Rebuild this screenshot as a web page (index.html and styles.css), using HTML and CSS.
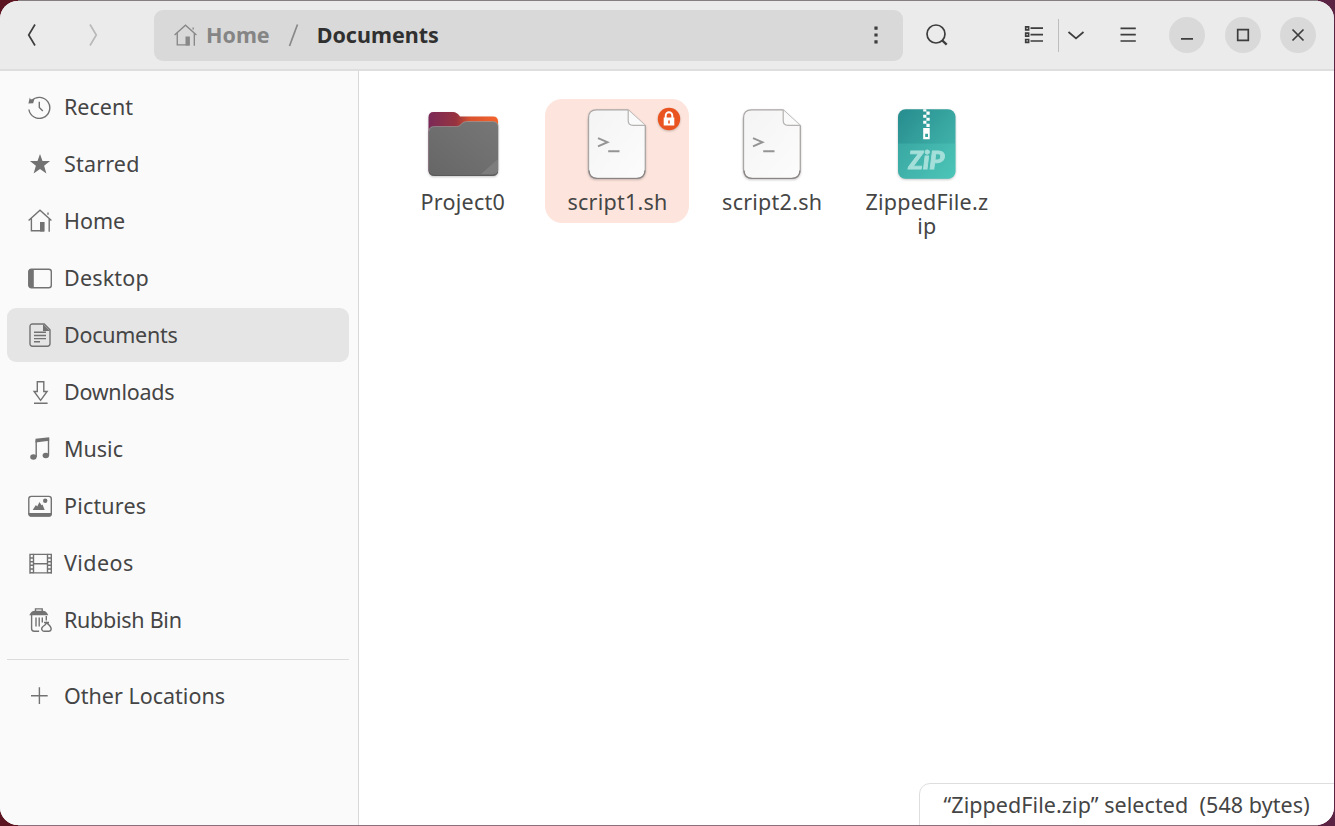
FILE: index.html
```html
<!DOCTYPE html>
<html lang="en">
<head>
<meta charset="utf-8">
<title>Documents</title>
<link rel="stylesheet" href="styles.css">
</head>
<body>
<svg class="defs" width="0" height="0">
  <defs>
    <symbol id="home" viewBox="0 0 24 24"><path d="M.6 11.600 12 1.200l11.400 10.400M3.400 9.500v12.300H16M21.200 10v12.800M20 3.600v2.200" fill="none" stroke="currentColor" stroke-width="1.400"/><path d="M12 13h4.600v9.400H12z" fill="currentColor"/></symbol>
    <linearGradient id="tab" x1="0" x2="1"><stop offset="0" stop-color="#7a2a58"/><stop offset=".4" stop-color="#97333f"/><stop offset=".6" stop-color="#d9532f"/><stop offset="1" stop-color="#f4632c"/></linearGradient>
    <linearGradient id="front" x1="0" y1="1" x2="1" y2="0"><stop offset="0" stop-color="#666"/><stop offset="1" stop-color="#777"/></linearGradient>
    <linearGradient id="paper" x1="0" y1="0" x2="1" y2="1"><stop offset="0" stop-color="#f4f4f4"/><stop offset="1" stop-color="#fcfcfc"/></linearGradient>
    <linearGradient id="teal" x1="0" y1="0" x2="1" y2="1"><stop offset="0" stop-color="#278c8e"/><stop offset="1" stop-color="#48bfb3"/></linearGradient>
    <symbol id="script" viewBox="0 0 72 72">
      <path d="M15.500 1.800h31.500l17.300 16v43.500q0 9-8.500 9H16q-8.500 0-8.500-9V10.300q0-8.500 8-8.500z" fill="url(#paper)" stroke="#aaa6a5" stroke-width="1.300"/>
      <path d="M8 62.500q.5 8 8.500 8h39q8 0 8.500-8" fill="none" stroke="#898483" stroke-width="1.200"/>
      <path d="M47.200 2v10.500q0 4.800 4.800 4.800h12" fill="#fafafa" stroke="#b5b2b1" stroke-width="1.200"/>
      <path d="m17 30.200 9.500 4-9.500 4.200M27.200 43.300h11.300" fill="none" stroke="#949494" stroke-width="1.900"/>
    </symbol>
  </defs>
</svg>
<div class="window">
  <header class="bar">
    <svg class="nav" viewBox="0 0 24 24"><path d="M16 1.500 9.700 12l6.300 10.500"/></svg>
    <svg class="nav off" viewBox="0 0 24 24"><path d="M9 1.500 15.300 12 9 22.500"/></svg>
    <div class="path">
      <svg class="crumb-icon"><use href="#home"/></svg>
      <span class="crumb">Home</span>
      <svg class="slash" viewBox="0 0 12 24"><path d="M1.500 23 9.500 1.500"/></svg>
      <span class="crumb here">Documents</span>
      <svg class="dots" viewBox="0 0 4 20"><path d="M.4 1.500h3.200v3.200H.4zM.4 8.400h3.200v3.200H.4zM.4 15.200h3.200v3.200H.4z"/></svg>
    </div>
    <svg class="tool search" viewBox="0 0 24 24"><circle cx="11" cy="11" r="9"/><path d="m16.800 17 4.900 4.700" stroke-width="2.400"/></svg>
    <svg class="tool list" viewBox="0 0 24 24"><path d="M8.500 5.200H21M8.500 11.600H21M8.500 18H21M3.700 3.900h2.900v2.900H3.700zM3.700 10.200h2.900v2.900H3.700zM3.700 16.500h2.900v2.900H3.700z"/></svg>
    <span class="divider"></span>
    <svg class="tool chev" viewBox="0 0 24 24"><path d="m4.500 9 7.500 6.500L19.500 9"/></svg>
    <svg class="tool menu" viewBox="0 0 24 24"><path d="M4.500 5.300h15.300M4.500 11.600h15.300M4.500 18h15.300"/></svg>
    <div class="controls">
      <svg class="round" viewBox="0 0 36 36"><path d="M12 21.900h12"/></svg>
      <svg class="round" viewBox="0 0 36 36"><path d="M12.700 12.700h10.600v10.600H12.700z"/></svg>
      <svg class="round" viewBox="0 0 36 36"><path d="m12.500 12.500 11 11m0-11-11 11"/></svg>
    </div>
  </header>
  <div class="body">
    <nav class="side">
      <a class="row"><svg viewBox="0 0 24 24"><path class="l" d="M3.600 5.700A10.500 10.500 0 1 1 .9 14.500M11.300 6.800v5.700l3.500 3.500"/><path d="m1.800 2.500.8 1.800 3.600.2-1 3.700L.4 8.500z"/></svg><span>Recent</span></a>
      <a class="row"><svg viewBox="0 0 24 24"><path d="m12 2 2.500 7h7.600l-6 4.700 2.300 7.700L12 16.900l-6.400 4.500 2.300-7.700-6-4.700h7.600z"/></svg><span class="wide">Starred</span></a>
      <a class="row"><svg><use href="#home"/></svg><span>Home</span></a>
      <a class="row"><svg viewBox="0 0 24 24"><rect class="l" x=".8" y="3.200" width="22.500" height="18.500" rx="2.500"/><path d="M3 3h2.800v18.900H3q-2.500-.2-2.500-2.800V5.500Q.5 3 3 3z"/></svg><span class="wide">Desktop</span></a>
      <a class="row active"><svg viewBox="0 0 24 24"><path class="l" d="M4.500 1h11.700L22 6.800v13.700q0 2.700-2.700 2.700H4.500q-2.500 0-2.500-2.700V3.500Q2 1 4.500 1z"/><path d="M15 1v7h7z"/><path class="l" d="M6 9.300h12M6 12.500h12M6 15.600h12M6 18.700h6"/></svg><span class="tight">Documents</span></a>
      <a class="row"><svg viewBox="0 0 24 24"><path class="l" d="M9.300 1.700h6.500v9.800h3.300l-6.500 8.800-6.500-8.800h3.200zM6 23.300h13.600"/></svg><span class="tight">Downloads</span></a>
      <a class="row"><svg viewBox="0 0 24 24"><path class="l" d="M8.200 20V3.500M20.500 18.500V1.500"/><path d="M7.500 1.700 21.200.2v3.500L7.500 5.500z"/><ellipse cx="5.400" cy="20" rx="3.200" ry="2.700"/><ellipse cx="17.800" cy="18.500" rx="3.200" ry="2.700"/></svg><span>Music</span></a>
      <a class="row"><svg viewBox="0 0 24 24"><rect class="l" x=".8" y="2.400" width="22.500" height="19.500" rx="2.500"/><path d="M.5 19h23v1q0 2.800-2.500 2.800H3Q.5 22.800.5 20zM4.700 16l3.200-5 1.300 1.500L11.500 8l2 3.200 1-.7 2.200 5.500z"/><circle cx="17.200" cy="6.800" r="2.200"/></svg><span class="wide">Pictures</span></a>
      <a class="row"><svg viewBox="0 0 24 24"><path class="l" d="M5.500 3.400h14v18.500h-14zM5.500 12.700h14"/><path class="l" d="M2 2.700v20M23.300 2.700v20M2 3.400h3.500M2 7h3.500M2 10.700h3.500M2 14.300h3.500M2 18h3.500M2 21.800h3.500M19.500 3.400h4M19.500 7h4M19.500 10.700h4M19.500 14.300h4M19.500 18h4M19.500 21.800h4"/></svg><span class="wider">Videos</span></a>
      <a class="row"><svg viewBox="0 0 24 24"><path d="M1.300 7.200q2-4.400 5.500-4.400h8q3.500 0 5.500 4.400z"/><path class="l" d="M7.500 3.200V.9h6.700v2.300M3.600 7v13.500q0 2.700 2.500 2.700h5M8 9.500v9M11.200 9.500v9M14.300 9.500v5M18.300 8v4.500M16 14.500h5M18.500 14.600q-.5 2.300-3.500 3.900-2 1.700-1 3.500.7 1.300 2 1.300h5q2-.2 2.200-2.200 0-2.700-4.700-6.500z"/></svg><span class="tight">Rubbish Bin</span></a>
      <hr class="rule">
      <a class="row"><svg viewBox="0 0 24 24"><path class="l" d="M11.400 3.300V20M3 11.700h16.700"/></svg><span>Other Locations</span></a>
    </nav>
    <main class="files">
      <div class="file">
        <svg viewBox="0 0 72 72"><path d="M6.500 4H26q4 0 7 4.500h33q5 0 5 5v50H1.500V9.500Q1.500 4 6.500 4z" fill="url(#tab)"/><path d="M7 18.500h23q2 0 4-2.500t5-2.500h27q5 0 5.300 5V62q0 6-5.800 6h-58q-6 0-6-6V24q0-5.500 5.500-5.500z" fill="url(#front)"/><path d="M54 66 71 51v11q0 4-5.500 4z" fill="#7d7d7d"/><path d="M2 64q1.500 3.500 6 3.500h57q4.500 0 6-3.500" fill="none" stroke="#575757" stroke-width=".8"/><path d="M1.900 23q.5-4.500 5.600-4.500H30q2.500 0 4.500-2.500t5-2.500h26q5 0 5.700 4.500" fill="none" stroke="#a3a3a3" stroke-width=".8" opacity=".7"/></svg>
        <span>Project0</span>
      </div>
      <div class="file selected">
        <svg><use href="#script"/></svg>
        <svg class="lock" viewBox="0 0 24 24"><circle cx="12" cy="12" r="11.200" fill="#e95420"/><path d="M8.700 11V8.500a3.300 3.300 0 0 1 6.600 0V11" fill="none" stroke="#fff" stroke-width="1.900"/><path d="M6.700 10.500h10.600v8H6.700z" fill="#fff"/><path d="M11.200 13.500h1.600v3h-1.600z" fill="#e95420"/></svg>
        <span>script1.sh</span>
      </div>
      <div class="file">
        <svg><use href="#script"/></svg>
        <span>script2.sh</span>
      </div>
      <div class="file">
        <svg viewBox="0 0 72 72"><rect x="7" y="1.200" width="57.500" height="69.500" rx="7.500" fill="url(#teal)"/><path d="M7 35.500h57.500v28q0 7-7.500 7H14.500q-7.500 0-7.500-7z" fill="#5fe0cc" opacity=".22"/><path d="M32.200 1.200h3.200v2.300h3.300v3.200h-3.300v3h3.300v3.100h-3.300v3h3.300V19h-3.300v-3.200h-3.200v-3h3.200v-3.100h-3.200v-3h3.200V3.500h-3.200z" fill="#fff"/><path d="M32.200 20h6.500v11.300h-6.500zM34.200 25.800v3.200H37v-3.200z" fill="#fff" fill-rule="evenodd"/><text class="zip" x="17.500" y="61" textLength="36" lengthAdjust="spacingAndGlyphs">ZiP</text></svg>
        <span>ZippedFile.z<br>ip</span>
      </div>
      <div class="status"><span>“ZippedFile.zip” selected&nbsp; (548 bytes)</span></div>
    </main>
  </div>
</div>
</body>
</html>
```
FILE: styles.css
```css
* { box-sizing: border-box; }
body {
  margin: 0;
  height: 826px;
  padding: 1px 1.5px 1px 0;
  overflow: hidden;
  background: linear-gradient(#857f82 0 1px, transparent 1px calc(100% - 1px), #8b6f7c calc(100% - 1px)) 18px 0 / 1300px 100% no-repeat,
    linear-gradient(90deg, #5c1420, #5b2344);
  font-family: "Noto Sans", "Open Sans", sans-serif;
  font-size: 21.5px;
  color: #454545;
}
.defs { position: absolute; }
.window {
  height: 824px;
  display: flex;
  flex-direction: column;
  border-radius: 18px;
  overflow: hidden;
  background: #fff;
}
.bar {
  flex: none;
  height: 70px;
  padding-right: 17.5px;
  display: flex;
  align-items: center;
  background: #ebebeb;
  border-bottom: 2px solid #dedede;
}
svg { flex: none; display: block; }
.bar svg { fill: none; stroke: #3d3d3d; stroke-width: 1.7; }
.nav { width: 24px; height: 24px; margin-left: 19px; }
.bar .nav.off { stroke: #b9b9b9; margin-left: 38px; }
.path {
  width: 748.5px;
  height: 51px;
  margin-left: 49px;
  padding: 0 25px 0 20px;
  display: flex;
  align-items: center;
  border-radius: 9px;
  background: #d9d9d9;
}
.bar .crumb-icon { width: 23px; height: 23px; color: #888; stroke: none; }
.crumb { margin-left: 9px; padding-bottom: 2px; font-weight: 700; color: #858585; }
.bar .slash { width: 12px; height: 24px; margin: 0 0 0 18px; stroke: #888; }
.here { margin-left: 17px; color: #303030; }
.bar .dots { width: 4px; height: 20px; margin-left: auto; fill: #3d3d3d; stroke: none; }
.tool { width: 24px; height: 24px; }
.search { margin-left: 22px; }
.list { margin-left: 73px; }
.divider { width: 1.5px; height: 33px; margin-left: 12px; background: #bdbdbd; }
.chev { margin-left: 4.5px; }
.menu { margin-left: 28px; }
.controls { margin-left: auto; display: flex; gap: 19.5px; }
.round { width: 36px; height: 36px; border-radius: 50%; background: #d9d9d9; }
.body { flex: 1; display: flex; min-height: 0; }
.side {
  width: 359px;
  padding: 9px 9px 0 7px;
  background: #fafafa;
  border-right: 1px solid #d9d9d9;
}
.row {
  height: 54px;
  margin-bottom: 3px;
  padding-left: 21px;
  display: flex;
  align-items: center;
  gap: 12px;
  border-radius: 9px;
  white-space: nowrap;
}
.row span { padding-bottom: 2px; }
.row svg { width: 24px; height: 24px; color: #727272; fill: #727272; }
.row .l { fill: none; stroke: #727272; stroke-width: 1.4; }
.row .wide { letter-spacing: .18px; }
.row .wider { letter-spacing: .45px; }
.row .tight { letter-spacing: -.27px; }
.active { background: #e5e5e5; }
.rule { height: 1.5px; margin: 11.5px 0 9px; border: 0; background: #dcdcdc; }
.files {
  position: relative;
  flex: 1;
  padding: 27.5px 0 0 31.5px;
  display: flex;
  align-items: flex-start;
  gap: 10.7px;
}
.file {
  position: relative;
  width: 144px;
  height: 124px;
  margin-left: .3px;
  margin-right: -.3px;
  padding-top: 9.5px;
  display: flex;
  flex-direction: column;
  align-items: center;
  text-align: center;
  line-height: 24px;
  letter-spacing: .25px;
  border-radius: 17px;
}
.file > svg { width: 72px; height: 72px; filter: drop-shadow(0 1px 1px rgba(0, 0, 0, .22)); }
.file span { margin-top: 10px; white-space: nowrap; }
.selected { background: #fde5dd; }
.file > .lock { position: absolute; top: 8.5px; right: 8.3px; width: 24px; height: 24px; }
.zip { font: italic 900 24px Lato, sans-serif; letter-spacing: 0; fill: #a5dfda; stroke: #a5dfda; stroke-width: .8; }
.status {
  position: absolute;
  right: -1px;
  bottom: -1px;
  width: 416px;
  height: 43px;
  padding: 0 0 0 24px;
  display: flex;
  align-items: center;
  letter-spacing: .07px;
  border: 1px solid #dedede;
  border-top-left-radius: 11px;
  background: #fff;
  white-space: nowrap;
}
```
